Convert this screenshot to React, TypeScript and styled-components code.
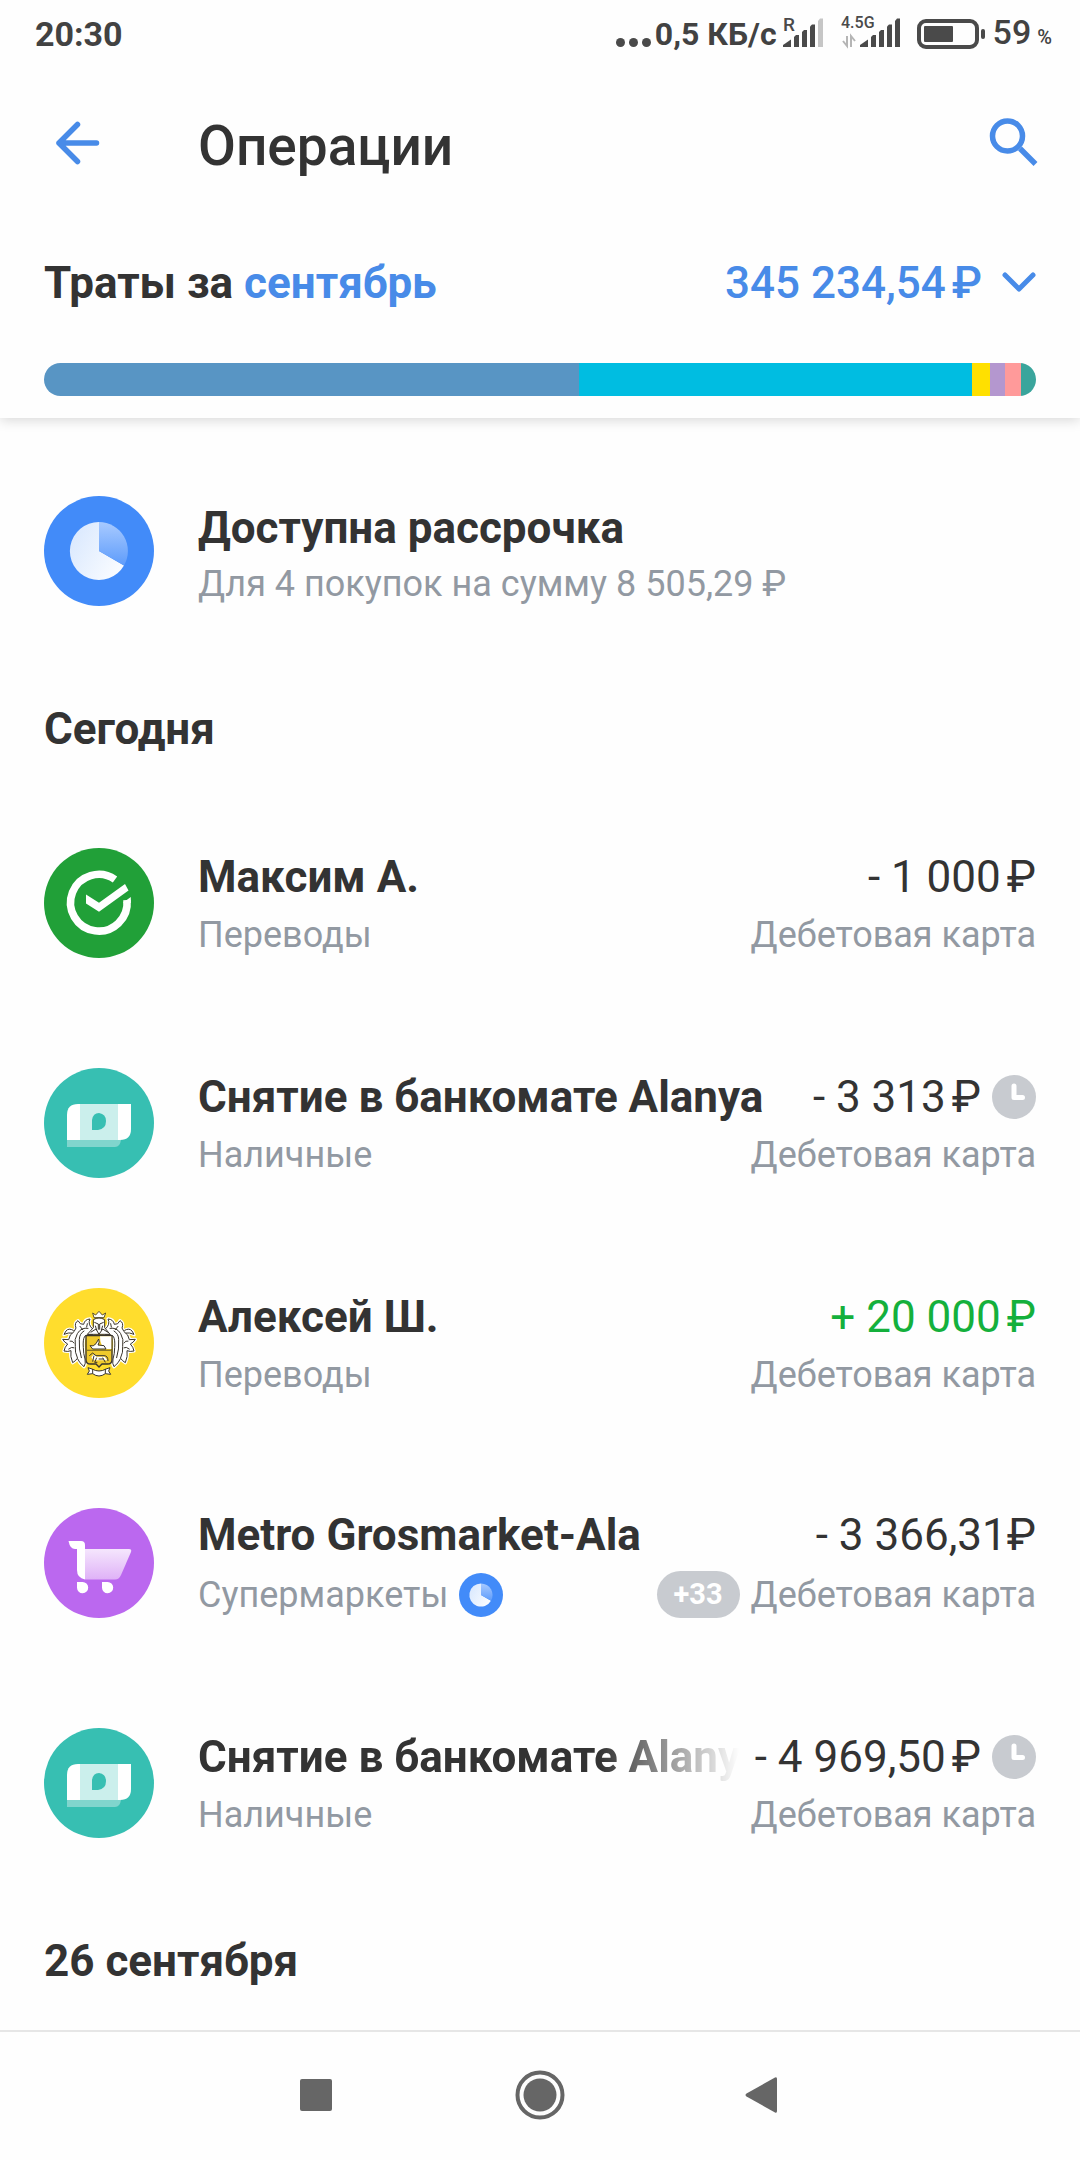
import React from "react";
import styled, { createGlobalStyle } from "styled-components";

const c = {
  text: "#333333",
  muted: "#9299a2",
  blue: "#488be8",
  brand: "#428bf9",
  badge: "#c8cbd0",
  system: "#4a4a4a",
};

const GlobalStyle = createGlobalStyle`
  *, *::before, *::after { box-sizing: border-box; }
  body {
    margin: 0;
    background: #fefefe;
    color: ${c.text};
    font-family: Roboto, "Noto Sans", sans-serif;
  }
  h1, h2, h3, p, ul { margin: 0; padding: 0; }
  svg { display: block; flex: none; }
`;

const Screen = styled.div`
  display: flex;
  flex-direction: column;
  min-height: 100vh;
`;

const StatusBar = styled.div`
  display: flex;
  align-items: center;
  justify-content: space-between;
  height: 68px;
  padding: 0 28px 0 35px;
  color: #424242;
  line-height: 40px;
`;

const Clock = styled.span`
  font-size: 34px;
  font-weight: 700;
`;

const StatusGroup = styled.div`
  display: flex;
  align-items: center;
`;

const Traffic = styled.span`
  margin: 0 6px 0 3px;
  font-size: 32px;
  font-weight: 700;
`;

const BatteryLevel = styled.span`
  display: flex;
  align-items: baseline;
  gap: 6px;
  margin-left: 8px;
  font-size: 34px;
  font-weight: 500;
`;

const Percent = styled.span`
  font-size: 20px;
`;

const Signal = styled.svg`
  margin-right: 16px;
`;

const Top = styled.header`
  background: #fefefe;
  padding-bottom: 22px;
  box-shadow: 0 2px 12px rgba(0, 0, 0, 0.16);
  clip-path: inset(0 0 -24px 0);
`;

const AppBar = styled.div`
  display: flex;
  align-items: center;
  height: 154px;
  padding: 0 39px 0 44px;
`;

const IconButton = styled.button`
  display: flex;
  padding: 0;
  border: 0;
  background: none;
  color: ${c.blue};
  cursor: pointer;
`;

const PageTitle = styled.h1`
  flex: 1;
  margin-left: 88px;
  padding-top: 2px;
  font-size: 55px;
  font-weight: 500;
  line-height: 66px;
`;

const Summary = styled.div`
  display: flex;
  align-items: center;
  justify-content: space-between;
  height: 120px;
  padding: 2px 44px 0;
`;

const SummaryTitle = styled.h2`
  font-size: 44px;
  font-weight: 700;
  line-height: 54px;
`;

const Month = styled.a`
  color: ${c.blue};
  font-weight: 700;
  text-decoration: none;
`;

const SummaryToggle = styled(IconButton)`
  align-items: center;
  gap: 20px;
  font: inherit;
  font-size: 44px;
  font-weight: 500;
  line-height: 54px;
`;

const Ruble = styled.span<{ $tight?: boolean }>`
  margin-left: ${(p) => (p.$tight ? 0 : 6)}px;
`;

const SpendBar = styled.div`
  display: flex;
  height: 33px;
  margin: 21px 44px 0;
  border-radius: 17px;
  overflow: hidden;
`;

const Segment = styled.div<{ $share: number; $color: string }>`
  flex: ${(p) => p.$share} 1 0;
  background: ${(p) => p.$color};
`;

const Content = styled.main`
  flex: 1;
  padding: 23px 44px 0;
`;

const DayTitle = styled.h2`
  padding: 41px 0 37px;
  font-size: 44px;
  font-weight: 700;
  line-height: 54px;
`;

const List = styled.ul`
  list-style: none;
`;

const Row = styled.li`
  display: flex;
  align-items: center;
  gap: 44px;
  height: 220px;
`;

const InstallmentRow = styled(Row).attrs({ as: "div" })``;

const Details = styled.div<{ $compact?: boolean }>`
  display: flex;
  flex: 1;
  flex-direction: column;
  gap: ${(p) => (p.$compact ? 7 : 9)}px;
  min-width: 0;
  padding-top: ${(p) => (p.$compact ? 4 : 0)}px;
`;

const Line = styled.div`
  display: flex;
  align-items: center;
  justify-content: space-between;
  gap: 16px;
`;

const Cluster = styled.div`
  display: flex;
  flex: none;
  align-items: center;
  gap: 11px;
`;

const Title = styled.h3<{ $faded?: boolean }>`
  overflow: hidden;
  min-width: 0;
  font-size: 44px;
  font-weight: 700;
  line-height: 54px;
  white-space: nowrap;
  mask-image: ${(p) =>
    p.$faded ? "linear-gradient(to left, transparent, #000 140px)" : "none"};
`;

const Amount = styled.span<{ $income?: boolean }>`
  color: ${(p) => (p.$income ? "#14b03c" : c.text)};
  font-size: 44px;
  line-height: 54px;
  white-space: nowrap;
`;

const Caption = styled.p`
  color: ${c.muted};
  font-size: 36px;
  line-height: 44px;
  white-space: nowrap;
`;

const Bonus = styled.span`
  padding: 0 17px;
  border-radius: 24px;
  background: ${c.badge};
  color: #ffffff;
  font-size: 29px;
  font-weight: 700;
  line-height: 47px;
`;

const NavBar = styled.nav`
  display: flex;
  align-items: center;
  justify-content: center;
  gap: 170px;
  height: 130px;
  border-top: 2px solid #e6e6e6;
`;

const NavButton = styled(IconButton)`
  color: #666666;
`;

function PieIcon({ size }: { size: number }) {
  const id = `pie${size}`;
  return (
    <svg width={size} height={size} viewBox="0 0 110 110" aria-hidden="true">
      <defs>
        <linearGradient id={`${id}a`} x1="0" y1="0" x2="1" y2="0.6">
          <stop offset="0" stopColor="#d6e6fe" />
          <stop offset="1" stopColor="#f8fbff" />
        </linearGradient>
        <linearGradient id={`${id}b`} x1="0" y1="0" x2="0" y2="1">
          <stop offset="0" stopColor="#a8caff" />
          <stop offset="1" stopColor="#5e9cfb" />
        </linearGradient>
      </defs>
      <circle cx="55" cy="55" r="55" fill={c.brand} />
      <path d="M55 55V26A29 29 0 1 0 80 69.500Z" fill={`url(#${id}a)`} />
      <path d="M55 55V26A29 29 0 0 1 80 69.500Z" fill={`url(#${id}b)`} />
    </svg>
  );
}

function CheckLogo() {
  return (
    <svg width="110" height="110" viewBox="0 0 110 110" aria-hidden="true">
      <circle cx="55" cy="55" r="55" fill="#21a038" />
      <path d="M71 31.500A28.300 28.300 0 1 0 83 52" fill="none" stroke="#fff" strokeWidth="7.600" />
      <path d="M42 46.500L55 54.700L81 36L84.500 42.500L55 63.700L42 55.500Z" fill="#fff" />
      <path d="M79.300 54.500L86.800 49V55H79.300Z" fill="#fff" />
    </svg>
  );
}

function CashIcon() {
  return (
    <svg width="110" height="110" viewBox="0 0 110 110" aria-hidden="true">
      <circle cx="55" cy="55" r="55" fill="#37bfb2" />
      <path d="M23 72H77Q76 79 71 79H23Z" fill="#80d5cd" />
      <path d="M23 72V47Q23 36 34 36H87V61Q87 72 76 72Z" fill="#fff" />
      <path d="M36 36H74V72H36Z" fill="#cbefec" />
      <path d="M48 62V52Q49 45 55 45Q62 46 62 53Q62 61 54 62Z" fill="#37bfb2" />
    </svg>
  );
}

function CartIcon() {
  return (
    <svg width="110" height="110" viewBox="0 0 110 110" aria-hidden="true">
      <defs>
        <linearGradient id="cart" x1="0" y1="0" x2="0" y2="1">
          <stop offset="0" stopColor="#f5e6fd" />
          <stop offset="1" stopColor="#dfb2f7" />
        </linearGradient>
      </defs>
      <circle cx="55" cy="55" r="55" fill="#bb68ef" />
      <path d="M41 41H85Q88 41 87 44L77 67Q75 71.500 71 71.500H41Z" fill="url(#cart)" />
      <path d="M24.500 33H37Q41 33 41 37V71.500Q33 70 33 62V41H31Q26 41 24.500 33Z" fill="#fff" />
      <path d="M33 74H38.500A5.600 5.600 0 1 1 33 79.700Z" fill="#fff" />
      <path d="M58 74H63.500A5.600 5.600 0 1 1 58 79.700Z" fill="#fff" />
    </svg>
  );
}

const wing =
  "M188 176Q172 162 180 146Q164 147 161 162Q150 164 144 151Q132 158 138 173L132 184Q118 192 116 208L98 207Q104 217 113 221Q104 230 102 242Q114 245 123 241Q120 258 128 277Q138 271 142 264Q148 278 162 289Q168 280 165 266Q160 250 160 232Q158 208 164 198Q172 190 188 192";

function CrestWing() {
  return (
    <g strokeLinejoin="round" strokeLinecap="round">
      <path d={wing} fill="#fff" stroke="#fff" strokeWidth="10" />
      <path d="M132 181Q116 170 106 182L101 194Q116 186 126 188Z" fill="#fff" stroke="#fff" strokeWidth="8" />
      <path d={wing} fill="#fff" stroke="#39342b" strokeWidth="3" />
      <path
        d="M130 180Q116 172 108 182L102 192Q116 186 126 188M174 174Q154 170 142 190Q132 206 136 228Q134 246 142 262M162 182Q148 190 148 208Q146 236 154 262M120 212Q128 210 132 218M116 236Q126 228 132 232M150 168L158 178M172 160L170 170"
        fill="none"
        stroke="#39342b"
        strokeWidth="3"
      />
    </g>
  );
}

function CrestLogo() {
  return (
    <svg width="110" height="110" viewBox="42 53 330 330" aria-hidden="true">
      <circle cx="207" cy="218" r="165" fill="#ffdd2d" />
      <CrestWing />
      <g transform="matrix(-1 0 0 1 414 0)">
        <CrestWing />
      </g>
      <path d="M188 128L192 142H222L227 128L217 134L207 123L197 134Z" fill="#fff" stroke="#5c5126" strokeWidth="3" />
      <path d="M190 148Q207 138 224 148V172L240 192H172L190 172Z" fill="#fff" stroke="#39342b" strokeWidth="3" />
      <path d="M193 156L205 161V178M221 156L209 161V178M196 166L200 180M218 166L214 180M182 186L198 176L207 192L218 176L234 186" fill="none" stroke="#39342b" strokeWidth="3" />
      <path d="M168 196H246V268Q246 281 232 281H216L207 290L198 281H182Q168 281 168 268Z" fill="#efc92c" stroke="#39342b" strokeWidth="4" />
      <path d="M210 198H244V236H226Q210 226 210 198Z" fill="#fff" />
      <path d="M170 240H244" stroke="#8a7624" strokeWidth="4" />
      <path d="M180 226Q190 230 198 220L206 206Q210 216 204 224L222 226L228 236H188Z" fill="#fff" stroke="#39342b" strokeWidth="3" />
      <path d="M184 261L192 251L200 259H224L232 270H190Z" fill="#fff" />
      <path d="M178 256L188 248L198 256H222Q234 256 234 272M192 256L188 274M200 262L194 276H202M218 262L226 276M206 266H220" fill="none" stroke="#39342b" strokeWidth="3" />
      <path d="M174 292L186 296Q207 308 228 296L240 292L236 302L242 312L226 310Q207 324 188 310L172 312L178 302Z" fill="#fff" stroke="#39342b" strokeWidth="3" />
      <path d="M188 296V310M226 296V310" stroke="#39342b" strokeWidth="3" />
    </svg>
  );
}

function PendingIcon() {
  return (
    <svg width="44" height="44" viewBox="0 0 44 44" role="img" aria-label="В обработке">
      <circle cx="22" cy="22" r="22" fill={c.badge} />
      <path d="M22 11V22.500H30.500" fill="none" stroke="#fff" strokeWidth="5" strokeLinecap="round" strokeLinejoin="round" />
    </svg>
  );
}

function SignalBars({ weak }: { weak?: boolean }) {
  return (
    <g fill={c.system}>
      <path d="M0 29V27L8 21.500V29Z" />
      <path d="M11 29V19L13 17H16V29Z" />
      <path d="M19 29V14L21 12H24V29Z" />
      <path d="M27 29V8.500L29 6.500H32V29Z" />
      <path d="M35 29V3L37 0.500H40V29Z" fill={weak ? "#c6c6c6" : c.system} />
    </g>
  );
}

type Operation = {
  icon: React.ReactNode;
  title: string;
  category: string;
  amount: string;
  pending?: boolean;
  income?: boolean;
  tight?: boolean;
  faded?: boolean;
  installment?: boolean;
  bonus?: string;
};

const today: Operation[] = [
  { icon: <CheckLogo />, title: "Максим А.", category: "Переводы", amount: "- 1 000" },
  { icon: <CashIcon />, title: "Снятие в банкомате Alanya", category: "Наличные", amount: "- 3 313", pending: true },
  { icon: <CrestLogo />, title: "Алексей Ш.", category: "Переводы", amount: "+ 20 000", income: true },
  { icon: <CartIcon />, title: "Metro Grosmarket-Ala", category: "Супермаркеты", amount: "- 3 366,31", tight: true, installment: true, bonus: "+33" },
  { icon: <CashIcon />, title: "Снятие в банкомате Alanya", category: "Наличные", amount: "- 4 969,50", pending: true, faded: true },
];

const segments = [
  { share: 535, color: "#5895c4" },
  { share: 393, color: "#00bde1" },
  { share: 18, color: "#ffe000" },
  { share: 15, color: "#b497cf" },
  { share: 16, color: "#ff9a9a" },
  { share: 15, color: "#3aa59c" },
];

function OperationRow({ op }: { op: Operation }) {
  return (
    <Row>
      {op.icon}
      <Details>
        <Line>
          <Title $faded={op.faded}>{op.title}</Title>
          <Cluster>
            <Amount $income={op.income}>
              {op.amount}
              <Ruble $tight={op.tight}>₽</Ruble>
            </Amount>
            {op.pending && <PendingIcon />}
          </Cluster>
        </Line>
        <Line>
          <Cluster>
            <Caption>{op.category}</Caption>
            {op.installment && <PieIcon size={44} />}
          </Cluster>
          <Cluster>
            {op.bonus && <Bonus>{op.bonus}</Bonus>}
            <Caption>Дебетовая карта</Caption>
          </Cluster>
        </Line>
      </Details>
    </Row>
  );
}

export default function App() {
  return (
    <Screen>
      <GlobalStyle />
      <Top>
        <StatusBar>
          <Clock>20:30</Clock>
          <StatusGroup>
            <svg width="36" height="34" viewBox="0 0 36 34" fill={c.system} aria-hidden="true">
              <circle cx="4.500" cy="25.500" r="4.500" />
              <circle cx="17.500" cy="25.500" r="4.500" />
              <circle cx="30.500" cy="25.500" r="4.500" />
            </svg>
            <Traffic>0,5 КБ/с</Traffic>
            <Signal width="42" height="50" viewBox="0 -8 42 50" aria-hidden="true">
              <text x="0" y="14" fontSize="19" fontWeight="500" fill={c.system}>R</text>
              <g transform="translate(0 1)"><SignalBars weak /></g>
            </Signal>
            <Signal width="60" height="50" viewBox="0 -8 60 50" aria-hidden="true">
              <text x="0" y="11" fontSize="16" fontWeight="500" fill={c.system}>4.5G</text>
              <path d="M2 24L6 29V19M10 30V19L14 24" fill="none" stroke="#b5b5b5" strokeWidth="2" />
              <g transform="translate(19 1)"><SignalBars /></g>
            </Signal>
            <svg width="68" height="30" viewBox="0 0 68 30" aria-hidden="true">
              <rect x="2" y="2" width="58" height="26" rx="7" fill="none" stroke={c.system} strokeWidth="4" />
              <rect x="7" y="7" width="29" height="16" rx="1" fill={c.system} />
              <rect x="64" y="10" width="4" height="10" rx="2" fill={c.system} />
            </svg>
            <BatteryLevel>
              59 <Percent>%</Percent>
            </BatteryLevel>
          </StatusGroup>
        </StatusBar>
        <AppBar>
          <IconButton aria-label="Назад">
            <svg width="66" height="66" viewBox="0 0 66 66" fill="none" stroke="currentColor" strokeWidth="5.500" strokeLinecap="round" strokeLinejoin="round">
              <path d="M52.500 31H15M33.500 12.500L15 31L33.500 49.500" />
            </svg>
          </IconButton>
          <PageTitle>Операции</PageTitle>
          <IconButton aria-label="Поиск">
            <svg width="54" height="54" viewBox="0 0 54 54" fill="none" stroke="currentColor" strokeWidth="5.500">
              <circle cx="20.500" cy="18" r="15" />
              <path d="M33 30.500L48.500 46" />
            </svg>
          </IconButton>
        </AppBar>
        <Summary>
          <SummaryTitle>
            Траты за <Month href="#month">сентябрь</Month>
          </SummaryTitle>
          <SummaryToggle>
            <span>
              345 234,54<Ruble>₽</Ruble>
            </span>
            <svg width="34" height="22" viewBox="0 0 34 22" fill="none" stroke="currentColor" strokeWidth="5" strokeLinecap="round" strokeLinejoin="round">
              <path d="M3 3L17 17L31 3" />
            </svg>
          </SummaryToggle>
        </Summary>
        <SpendBar>
          {segments.map((s) => (
            <Segment key={s.color} $share={s.share} $color={s.color} />
          ))}
        </SpendBar>
      </Top>
      <Content>
        <InstallmentRow>
          <PieIcon size={110} />
          <Details $compact>
            <Title>Доступна рассрочка</Title>
            <Caption>Для 4 покупок на сумму 8 505,29 ₽</Caption>
          </Details>
        </InstallmentRow>
        <DayTitle>Сегодня</DayTitle>
        <List>
          {today.map((op, i) => (
            <OperationRow key={i} op={op} />
          ))}
        </List>
        <DayTitle>26 сентября</DayTitle>
      </Content>
      <NavBar>
        <NavButton aria-label="Недавние">
          <svg width="54" height="54" viewBox="0 0 54 54" fill="currentColor">
            <rect x="11" y="10" width="32" height="32" rx="2" />
          </svg>
        </NavButton>
        <NavButton aria-label="Домой">
          <svg width="54" height="54" viewBox="0 0 54 54" fill="currentColor">
            <circle cx="27" cy="26" r="22.500" fill="none" stroke="currentColor" strokeWidth="4" />
            <circle cx="27" cy="26" r="16.500" />
          </svg>
        </NavButton>
        <NavButton aria-label="Назад">
          <svg width="54" height="54" viewBox="0 0 54 54" fill="currentColor">
            <path d="M9.500 24.500L38 8.500Q40 7.500 40 10V42Q40 44.500 38 43.500L9.500 27.500Q7.500 26 9.500 24.500Z" />
          </svg>
        </NavButton>
      </NavBar>
    </Screen>
  );
}
